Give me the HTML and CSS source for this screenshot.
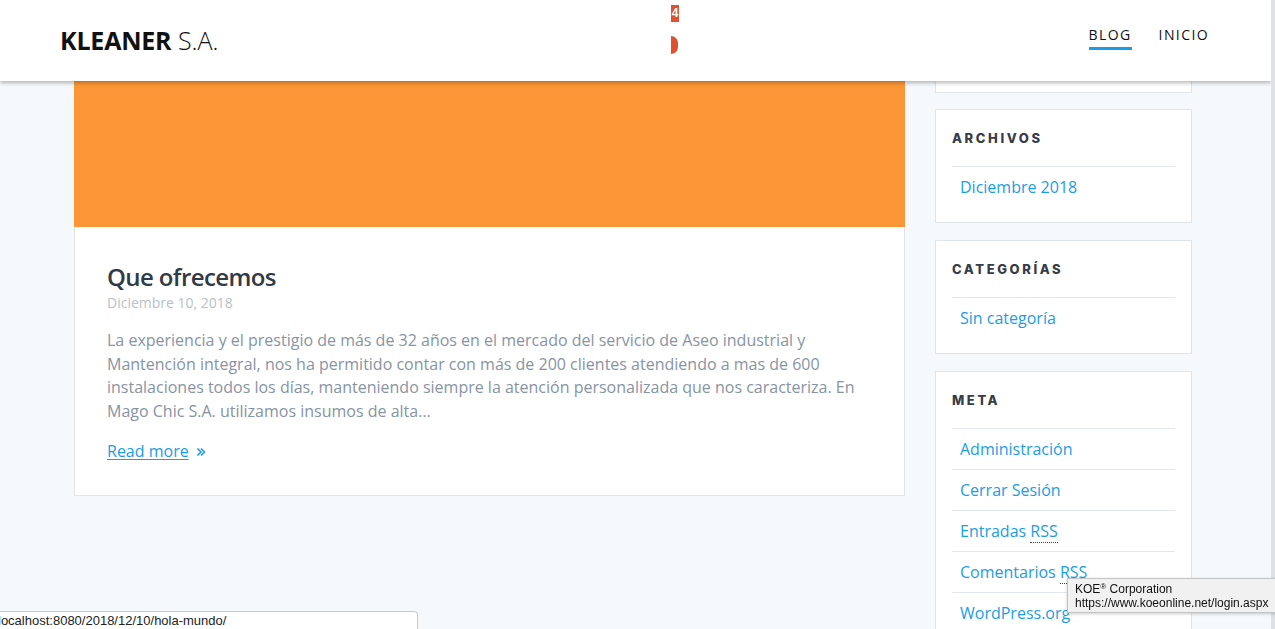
FILE: index.html
```html
<!DOCTYPE html>
<html lang="es">
<head>
<meta charset="utf-8">
<title>KLEANER S.A.</title>
<link rel="stylesheet" href="styles.css">
</head>
<body>
<header class="site-header">
  <a class="logo" href="#"><strong>KLEANER</strong> <span class="logo-sa">S.A.</span></a>
  <div class="badge-stub">
    <span class="badge-num">4</span>
    <span class="badge-half"></span>
  </div>
  <nav class="nav">
    <a class="nav-link active" href="#">BLOG</a>
    <a class="nav-link" href="#">INICIO</a>
  </nav>
</header>

<div class="page">
  <main class="main">
    <article class="post">
      <div class="post-image"></div>
      <div class="post-body">
        <h2 class="post-title">Que ofrecemos</h2>
        <div class="post-date">Diciembre 10, 2018</div>
        <p class="post-excerpt">La experiencia y el prestigio de más de 32 años en el mercado del servicio de Aseo industrial y Mantención integral, nos ha permitido contar con más de 200 clientes atendiendo a mas de 600 instalaciones todos los días, manteniendo siempre la atención personalizada que nos caracteriza. En Mago Chic S.A. utilizamos insumos de alta…</p>
        <a class="read-more" href="#"><span class="rm-text">Read more</span>
          <svg class="rm-icon" width="10" height="10" viewBox="0 0 10 10"><path d="M1.5 1.5 L5 5 L1.5 8.5 M5 1.5 L8.5 5 L5 8.5" fill="none" stroke="#1a9de6" stroke-width="1.6"/></svg>
        </a>
      </div>
    </article>
  </main>

  <aside class="sidebar">
    <section class="widget widget-stub"></section>
    <section class="widget">
      <h3 class="widget-title">ARCHIVOS</h3>
      <ul class="widget-list">
        <li><a href="#">Diciembre 2018</a></li>
      </ul>
    </section>
    <section class="widget">
      <h3 class="widget-title">CATEGORÍAS</h3>
      <ul class="widget-list">
        <li><a href="#">Sin categoría</a></li>
      </ul>
    </section>
    <section class="widget">
      <h3 class="widget-title">META</h3>
      <ul class="widget-list">
        <li><a href="#">Administración</a></li>
        <li><a href="#">Cerrar Sesión</a></li>
        <li><a href="#">Entradas <abbr class="abbr">RSS</abbr></a></li>
        <li><a href="#">Comentarios <abbr class="abbr">RSS</abbr></a></li>
        <li><a href="#">WordPress.org</a></li>
      </ul>
    </section>
  </aside>
</div>

<div class="scroll-edge"></div>
<div class="status-bar">localhost:8080/2018/12/10/hola-mundo/</div>
<div class="tooltip">KOE<sup class="reg">®</sup> Corporation<br>https://www.koeonline.net/login.aspx</div>
</body>
</html>
```

FILE: styles.css
```css
* { box-sizing: border-box; }
html, body { margin: 0; padding: 0; }
body {
  background: #f5f9fc;
  font-family: "Open Sans", "Liberation Sans", sans-serif;
  color: #333a45;
  height: 629px;
  overflow: hidden;
}
a { text-decoration: none; }

.site-header {
  position: relative;
  z-index: 5;
  height: 81px;
  width: 1271px;
  background: #fff;
  box-shadow: 0 2px 4px rgba(0, 0, 0, 0.28);
  display: flex;
  align-items: center;
  justify-content: space-between;
  padding: 0 62px 0 60px;
}
.logo {
  font-size: 25px;
  color: #111;
  font-weight: 300;
  margin-top: -2px;
}
.logo strong { font-weight: 700; letter-spacing: -0.2px; }
.logo-sa { letter-spacing: 0; }

.badge-stub {
  position: absolute;
  left: 671px;
  top: 5px;
  width: 8px;
}
.badge-num {
  display: block;
  width: 8px;
  height: 17px;
  background: #df5230;
  color: #fff;
  font: 700 12px/17px "Liberation Sans", sans-serif;
  text-align: center;
  overflow: hidden;
}
.badge-half {
  display: block;
  margin-top: 14px;
  width: 7px;
  height: 18px;
  background: #df5230;
  border-radius: 0 9px 9px 0;
}

.nav { display: flex; gap: 27px; margin-top: -6px; }
.nav-link {
  color: #111;
  font-size: 14px;
  font-weight: 500;
  letter-spacing: 1.4px;
  padding-bottom: 3px;
  border-bottom: 3px solid transparent;
}
.nav-link.active { border-bottom-color: #1a9de6; }

.page {
  display: flex;
  gap: 30px;
  padding-left: 74px;
}
.main { width: 831px; }
.post {
  background: #fff;
  border: 1px solid #dfe4e8;
  border-top: none;
}
.post-image {
  height: 146px;
  background: #fd9636;
  margin: 0 -1px;
}
.post-body { padding: 34px 32px 32px 32px; }
.post-title {
  margin: 0;
  font-size: 24px;
  font-weight: 600;
  letter-spacing: -0.6px;
  line-height: 32px;
  color: #323a46;
}
.post-date {
  font-size: 14px;
  color: #b9c1c9;
  line-height: 20px;
}
.post-excerpt {
  margin: 16px 0 15px;
  font-size: 16px;
  line-height: 23.7px;
  color: #8794a3;
}
.read-more {
  display: inline-flex;
  align-items: center;
  gap: 7px;
  font-size: 16px;
  color: #1a9de6;
  line-height: 24px;
}
.rm-text { text-decoration: underline; text-underline-offset: 2px; }
.rm-icon { margin-top: 2px; }

.sidebar {
  width: 257px;
  display: flex;
  flex-direction: column;
  gap: 17px;
}
.widget {
  background: #fff;
  border: 1px solid #dfe4e8;
  padding: 18px 16px 15px;
}
.widget-stub {
  height: 12px;
  padding: 0;
  border-top: none;
  margin-bottom: -1px;
}
.widget-title {
  margin: 0 0 18px;
  font-family: "Inter", "Liberation Sans", sans-serif;
  font-size: 13px;
  font-weight: 800;
  letter-spacing: 2.6px;
  line-height: 20px;
  color: #373c46;
}
.widget-list { list-style: none; margin: 0; padding: 0; }
.widget-list li {
  border-top: 1px solid #e2e6ea;
  height: 41px;
  display: flex;
  align-items: center;
  padding-left: 8px;
}
.widget-list a { color: #1a9de6; font-size: 16px; }
.abbr {
  text-decoration: none;
  border-bottom: 1px dotted #444;
}

.scroll-edge {
  position: fixed;
  top: 0;
  right: 0;
  width: 4px;
  height: 629px;
  background: #dfe2e5;
  z-index: 6;
}
.status-bar {
  position: fixed;
  left: -4px;
  bottom: 0;
  width: 422px;
  height: 18px;
  background: #fff;
  border: 1px solid #c9c9c9;
  border-bottom: none;
  border-radius: 0 4px 0 0;
  font: 13px/17px "Liberation Sans", sans-serif;
  color: #222;
  padding-left: 1px;
  z-index: 7;
}
.tooltip {
  position: fixed;
  left: 1067px;
  top: 578px;
  width: 210px;
  height: 35px;
  background: #f1f1f1;
  border: 1px solid #c4c4c4;
  box-shadow: 0 1px 3px rgba(0, 0, 0, 0.2);
  font: 12px/14px "Liberation Sans", sans-serif;
  color: #111;
  padding: 3px 0 0 7px;
  white-space: nowrap;
  z-index: 7;
}
.reg { font-size: 8px; vertical-align: 4px; line-height: 0; }
```
